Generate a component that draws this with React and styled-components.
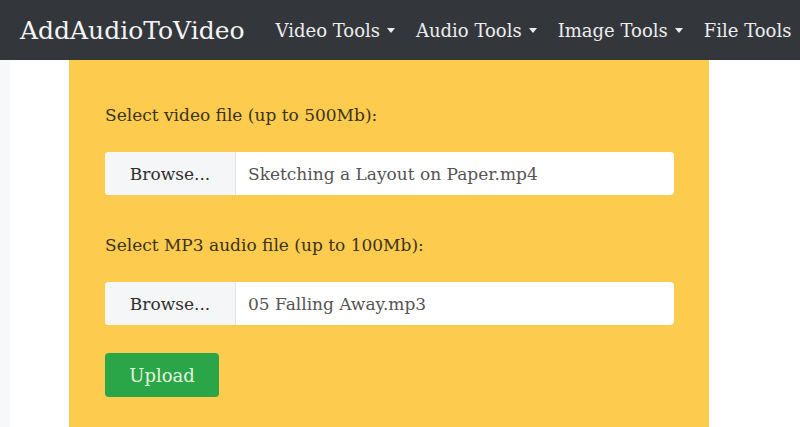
import React from "react";
import styled, { createGlobalStyle } from "styled-components";

const Global = createGlobalStyle`
  html, body { margin: 0; padding: 0; background: #ffffff; }
  body { font-family: "DejaVu Serif", "Liberation Serif", serif; overflow: hidden; }
`;

const Page = styled.div`
  width: 800px;
  height: 427px;
  display: flex;
  flex-direction: column;
  background: #ffffff;
`;

const NavBar = styled.nav`
  height: 60px;
  flex: none;
  background: #33373c;
  display: flex;
  align-items: center;
  padding-left: 20px;
  white-space: nowrap;
  overflow: hidden;
`;

const Brand = styled.div`
  color: #f4f4f4;
  font-size: 25px;
  margin-right: 31px;
`;

const NavList = styled.div`
  display: flex;
  align-items: center;
  gap: 21px;
`;

const NavItem = styled.div`
  display: flex;
  align-items: center;
  gap: 7px;
  color: #ededed;
  font-size: 18px;
`;

const Caret = styled.span`
  width: 0;
  height: 0;
  border-left: 4px solid transparent;
  border-right: 4px solid transparent;
  border-top: 5px solid #ededed;
`;

const Body = styled.div`
  flex: 1;
  display: flex;
`;

const Side = styled.div`
  width: 69px;
  flex: none;
  background: linear-gradient(to right, #f6f8fa 0 10px, #ffffff 10px);
`;

const Panel = styled.div`
  width: 640px;
  flex: none;
  background: #fdcc4e;
  padding: 42px 35px 0 36px;
  box-sizing: border-box;
  display: flex;
  flex-direction: column;
`;

const Label = styled.div`
  color: #3b3320;
  font-size: 17px;
  height: 26px;
  line-height: 26px;
  margin-bottom: ${(p) => p.$gap}px;
`;

const FileInput = styled.div`
  display: flex;
  height: 43px;
  border-radius: 4px;
  overflow: hidden;
  background: #ffffff;
  margin-bottom: ${(p) => p.$gap}px;
`;

const BrowseBox = styled.div`
  width: 130px;
  flex: none;
  background: #f5f6f8;
  border-right: 1px solid #e4e4e2;
  display: flex;
  align-items: center;
  justify-content: center;
  color: #2f2f2f;
  font-size: 17px;
`;

const FileName = styled.div`
  flex: 1;
  display: flex;
  align-items: center;
  padding-left: 12px;
  color: #555555;
  font-size: 17px;
`;

const UploadButton = styled.button`
  align-self: flex-start;
  width: 114px;
  height: 44px;
  border: none;
  border-radius: 4px;
  background: #2aa548;
  color: #e4f5df;
  font-family: "DejaVu Serif", "Liberation Serif", serif;
  font-size: 18px;
  padding: 0;
`;

const RightSpace = styled.div`
  flex: 1;
  background: #ffffff;
`;

const navItems = [
  { label: "Video Tools", caret: true },
  { label: "Audio Tools", caret: true },
  { label: "Image Tools", caret: true },
  { label: "File Tools", caret: false },
];

export default function App() {
  return (
    <Page>
      <Global />
      <NavBar>
        <Brand>AddAudioToVideo</Brand>
        <NavList>
          {navItems.map((item) => (
            <NavItem key={item.label}>
              {item.label}
              {item.caret && <Caret />}
            </NavItem>
          ))}
        </NavList>
      </NavBar>
      <Body>
        <Side />
        <Panel>
          <Label $gap={24}>Select video file (up to 500Mb):</Label>
          <FileInput $gap={37}>
            <BrowseBox>Browse...</BrowseBox>
            <FileName>Sketching a Layout on Paper.mp4</FileName>
          </FileInput>
          <Label $gap={24}>Select MP3 audio file (up to 100Mb):</Label>
          <FileInput $gap={28}>
            <BrowseBox>Browse...</BrowseBox>
            <FileName>05 Falling Away.mp3</FileName>
          </FileInput>
          <UploadButton>Upload</UploadButton>
        </Panel>
        <RightSpace />
      </Body>
    </Page>
  );
}
